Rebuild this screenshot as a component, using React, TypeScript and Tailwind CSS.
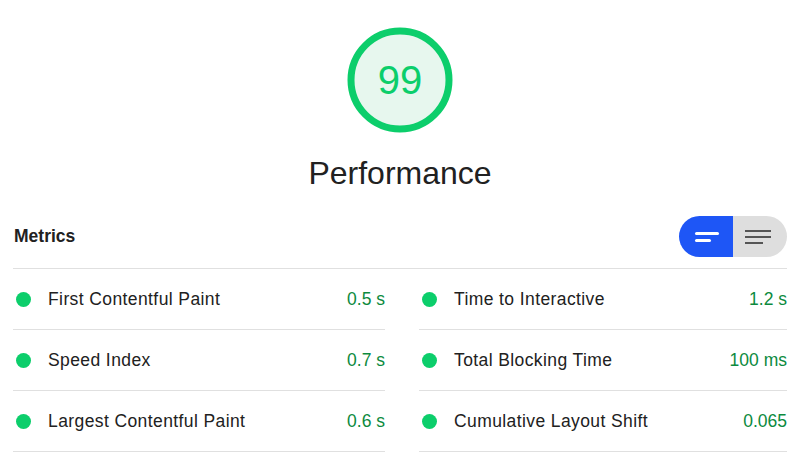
import { ReactNode } from "react";

const metrics = [
  { label: "First Contentful Paint", value: "0.5 s" },
  { label: "Time to Interactive", value: "1.2 s" },
  { label: "Speed Index", value: "0.7 s" },
  { label: "Total Blocking Time", value: "100 ms" },
  { label: "Largest Contentful Paint", value: "0.6 s" },
  { label: "Cumulative Layout Shift", value: "0.065" },
];

function Gauge({ score }: { score: number }) {
  return (
    <div className="relative size-[106px]">
      <svg viewBox="0 0 106 106" className="absolute inset-0 size-full">
        <circle cx="53" cy="53" r="49" fill="#e7f7ee" stroke="#0cce6b" strokeWidth="7" />
      </svg>
      <span className="relative grid size-full place-items-center text-[40px] font-light text-[#0cce6b]">{score}</span>
    </div>
  );
}

function Row({ label, value }: { label: string; value: ReactNode }) {
  return (
    <div className="flex h-[61px] items-center border-b border-[#e0e0e0] pl-[3px]">
      <span className="size-[15px] rounded-full bg-[#0cce6b]" />
      <span className="ml-[17px] flex-1 text-[17.5px] tracking-[0.4px] text-[#212121]">{label}</span>
      <span className="text-[17.5px] text-[#0c8a3e]">{value}</span>
    </div>
  );
}

export default function App() {
  return (
    <div className="h-[458px] w-[800px] overflow-hidden bg-white font-['Liberation_Sans',Arial,sans-serif]">
      <div className="flex flex-col items-center pt-[27px]">
        <Gauge score={99} />
        <h1 className="mt-[22px] text-[32px] leading-[36px] text-[#212121]">Performance</h1>
      </div>
      <div className="px-[13px] pt-[19px]">
        <div className="flex items-center justify-between border-b border-[#e0e0e0] pt-[6px] pb-[11px]">
          <h2 className="pl-px text-[17.5px] font-bold text-[#212121]">Metrics</h2>
          <div className="flex h-[41px] w-[108px] overflow-hidden rounded-full">
            <span className="flex w-[54px] flex-col items-center justify-center gap-[4px] bg-[#1e56f6] pl-[2px]">
              <span className="h-[3px] w-[24px] rounded-sm bg-white" />
              <span className="mr-[8px] h-[3px] w-[16px] rounded-sm bg-white" />
            </span>
            <span className="flex w-[54px] flex-col items-center justify-center gap-[4px] bg-[#dedede] pr-[4px]">
              <span className="h-[2px] w-[26px] bg-[#555]" />
              <span className="h-[2px] w-[26px] bg-[#555]" />
              <span className="mr-[8px] h-[2px] w-[18px] bg-[#555]" />
            </span>
          </div>
        </div>
        <div className="grid grid-cols-[372px_368px] gap-x-[34px]">
          {metrics.map((m) => (
            <Row key={m.label} label={m.label} value={m.value} />
          ))}
        </div>
      </div>
    </div>
  );
}
